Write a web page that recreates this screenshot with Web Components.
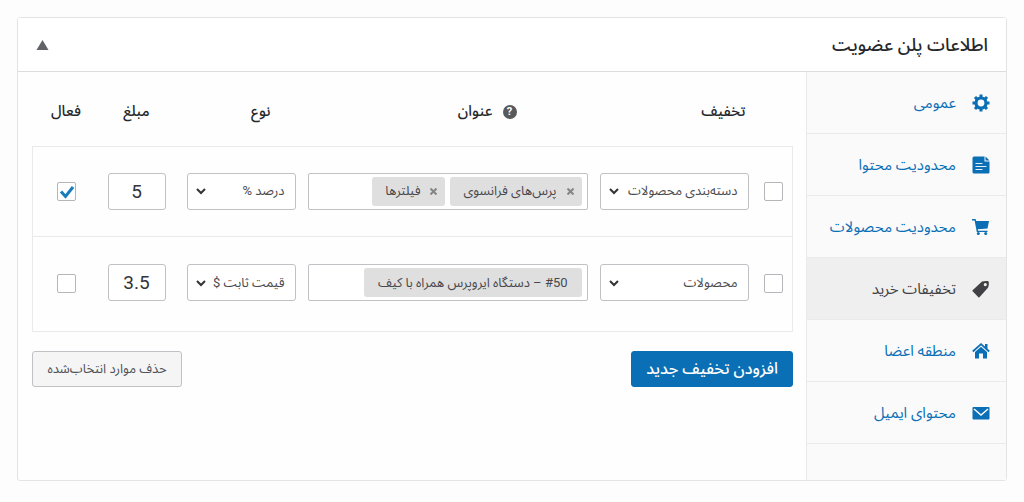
<!DOCTYPE html>
<html lang="fa" dir="rtl">
<head>
<meta charset="utf-8">
<meta name="viewport" content="width=device-width, initial-scale=1">
<title>اطلاعات پلن عضویت</title>
<style>
  body {
    margin: 0;
    padding: 17px;
    background: #fdfdfd;
    color: #26282b;
    font: 13px/20px Roboto, "Noto Sans Arabic", "DejaVu Sans", sans-serif;
    --blue: #0a6fb5;
    --line: #e9eaeb;
    --field: #bfc1c5;
  }
</style>
</head>
<body>

<plan-panel>
  <span slot="title">اطلاعات پلن عضویت</span>
  <panel-tab slot="tabs" icon="gear">عمومی</panel-tab>
  <panel-tab slot="tabs" icon="page">محدودیت محتوا</panel-tab>
  <panel-tab slot="tabs" icon="cart">محدودیت محصولات</panel-tab>
  <panel-tab slot="tabs" icon="tag" current>تخفیفات خرید</panel-tab>
  <panel-tab slot="tabs" icon="home">منطقه اعضا</panel-tab>
  <panel-tab slot="tabs" icon="mail">محتوای ایمیل</panel-tab>
  <discount-table></discount-table>
  <push-button slot="actions" kind="primary">افزودن تخفیف جدید</push-button>
  <push-button slot="actions">حذف موارد انتخاب‌شده</push-button>
</plan-panel>

<script>
const ICONS = {
  gear: '<path d="M7.500.5h3v4h-3zM7.500 13.500h3v4h-3zM.5 7.500h4v3h-4zM13.500 7.500h4v3h-4z"/><path d="M7.500.5h3v4h-3zM7.500 13.500h3v4h-3zM.5 7.500h4v3h-4zM13.500 7.500h4v3h-4z" transform="rotate(45 9 9)"/><circle cx="9" cy="9" r="5" fill="none" stroke="currentColor" stroke-width="3.200"/>',
  page: '<path d="M2 .5h10.500v5h5V16q0 1.500-1.500 1.500H2Q.5 17.500.5 16V2Q.5.5 2 .5z"/><path d="M13.500.5 17.500 4.500h-4z"/><path d="M3.500 7.500h7M3.500 10.500h11M3.500 13.500h7" stroke="#e4eef5" stroke-width="1"/>',
  cart: '<path d="M0 1h3.600l.6 2H17l-1.500 7.500-9.700.8.3 1.400h9.400v1.300H4.800L2.600 2.500H0z"/><circle cx="6.300" cy="15.500" r="1.500"/><circle cx="13.700" cy="15.500" r="1.500"/>',
  tag: '<path fill-rule="evenodd" d="M10 1.500Q12.500.6 15.800 1q1 .2 1 1.200.4 3.300-.8 5.600L7.400 17.200q-.5.500-1 0L.6 11.200q-.5-.5 0-1zM13.300 3a1.600 1.600 0 1 0 0 3.200 1.600 1.600 0 0 0 0-3.200z"/>',
  home: '<path d="M3 10l6-5.300 6 5.300v6.500h-4v-5H7v5H3z"/><path d="M.8 9.500 9 2.200l8.200 7.300" fill="none" stroke="currentColor" stroke-width="1.800"/><path d="M13 2h2.500v5L13 5z"/>',
  mail: '<rect x=".5" y="3" width="17" height="12.500" rx="1"/><path d="m2 5 7 6 7-6" fill="none" stroke="#fafafa" stroke-width="1.500"/>'
};

function define(name, render, setup) {
  customElements.define(name, class extends HTMLElement {
    connectedCallback() {
      if (this.shadowRoot) return;
      const root = this.attachShadow({ mode: 'open' });
      root.innerHTML = `<style>*{box-sizing:border-box}</style>` + render(this);
      if (setup) setup(root, this);
    }
  });
}

define('panel-tab', el => `
  <style>
    :host { display: block; border-bottom: 1px solid var(--line); }
    a { display: flex; align-items: center; gap: 16px; min-height: 61px; padding: 0 16px;
        color: var(--blue); font-size: 15px; text-decoration: none; }
    :host([current]) { background: #efefef; }
    :host([current]) a { color: #414145; }
    svg { width: 18px; height: 18px; fill: currentColor; flex: none; }
  </style>
  <a href="#${el.getAttribute('icon')}" ${el.hasAttribute('current') ? 'aria-current="page"' : ''}>
    <svg viewBox="0 0 18 18" aria-hidden="true">${ICONS[el.getAttribute('icon')]}</svg>
    <span><slot></slot></span>
  </a>`);

define('push-button', () => `
  <style>
    :host { display: block; }
    button { min-width: 150px; height: 36px; padding: 0 14px; border: 1px solid var(--field);
             border-radius: 3px; background: #f5f5f6; color: #505155; font: inherit; cursor: pointer; }
    :host([kind="primary"]) button { min-width: 160px; border-color: var(--blue); background: var(--blue); color: #fff; font-size: 16px; font-weight: 500; }
  </style>
  <button type="button"><slot></slot></button>`);

define('tick-box', el => `
  <style>
    :host { display: inline-grid; vertical-align: middle; }
    input, svg { grid-area: 1 / 1; width: 19px; height: 19px; margin: 0; }
    input { appearance: none; border: 1px solid #b4b6b9; border-radius: 2px; background: #fff; }
    svg { pointer-events: none; visibility: hidden; fill: none; stroke: #1a7bbb; stroke-width: 3; }
    input:checked + svg { visibility: visible; }
  </style>
  <input type="checkbox" aria-label="${el.getAttribute('label')}" ${el.hasAttribute('checked') ? 'checked' : ''}>
  <svg viewBox="0 0 19 19" aria-hidden="true"><path d="m4 9.500 4.500 5L16 5"/></svg>`);

define('choice-field', el => `
  <style>
    :host { display: grid; align-items: center; }
    select, svg { grid-area: 1 / 1; }
    select { appearance: none; width: 100%; height: 37px; padding: 0 10px; border: 1px solid var(--field);
             border-radius: 3px; background: #fff; color: #4a4b4f; font: inherit; }
    svg { justify-self: end; width: 10px; height: 8px; margin-inline-end: 9px; pointer-events: none;
          fill: none; stroke: #333; stroke-width: 2; }
  </style>
  <select aria-label="${el.getAttribute('label')}">
    ${el.getAttribute('options').split('|').map(o => `<option>${o}</option>`).join('')}
  </select>
  <svg viewBox="0 0 10 8" aria-hidden="true"><path d="m1 2 4 4 4-4"/></svg>`);

define('amount-field', el => `
  <style>
    :host { display: block; }
    input { display: block; width: 58px; height: 37px; margin: 0 auto; padding: 0; border: 1px solid var(--field);
            border-radius: 3px; background: #fff; color: #333438; font: inherit; font-size: 19px; text-align: center; }
  </style>
  <input type="text" inputmode="decimal" aria-label="مبلغ" value="${el.getAttribute('value')}">`);

define('tag-field', () => `
  <style>
    :host { display: flex; gap: 5px; height: 37px; padding: 3px 5px; border: 1px solid var(--field);
            border-radius: 2px; background: #fff; }
    input { flex: 1; width: 0; min-width: 0; border: 0; padding: 0; outline: 0; background: none; font: inherit; }
  </style>
  <slot></slot>
  <input type="text" aria-label="عنوان">`);

define('tag-chip', el => `
  <style>
    :host { display: flex; align-items: center; gap: 10px; padding-inline: 8px 13px; border-radius: 3px;
            background: #dfdfe0; color: #48494d; white-space: nowrap; }
    :host([fixed]) { padding-inline: 14px; }
    button { display: flex; padding: 0; border: 0; background: none; cursor: pointer; }
    svg { width: 7px; height: 7px; fill: none; stroke: #858589; stroke-width: 2; }
  </style>
  ${el.hasAttribute('fixed') ? '' : '<button type="button" aria-label="حذف"><svg viewBox="0 0 7 7"><path d="m.5.5 6 6m0-6-6 6"/></svg></button>'}
  <span><slot></slot></span>`,
  (root, el) => root.querySelector('button')?.addEventListener('click', () => el.remove()));

define('help-tip', () => `
  <style>
    :host { display: inline-flex; vertical-align: middle; margin-inline-end: 10px; }
    button { width: 14px; height: 14px; padding: 0; border: 0; border-radius: 50%; background: #58595b;
             color: #fff; font: bold 11px/14px Roboto, sans-serif; text-align: center; }
  </style>
  <button type="button" aria-label="راهنما">?</button>`);

define('discount-table', () => `
  <style>
    :host { display: block; }
    table { width: 100%; table-layout: fixed; border-collapse: collapse; }
    th { height: 74px; padding: 4px 0 0; font-size: 15px; font-weight: 500; text-align: center; }
    td { height: 90px; padding: 0 6px; }
    tbody tr { border: 1px solid var(--line); }
    tbody tr:last-child td { height: 95px; padding-bottom: 2px; }
    .check { width: 38px; }
    .discount { width: 161px; text-align: start; padding-inline-start: 9px; }
    .name { text-align: start; padding-inline-start: 77px; }
    .type { width: 128px; text-align: start; padding-inline-start: 31px; }
    .amount { width: 74px; }
    .active { width: 67px; }
    td:first-child { padding: 0; text-align: center; }
    td:nth-child(4) { padding-inline-end: 13px; }
    td:last-child { text-align: center; }
  </style>
  <table>
    <thead>
      <tr>
        <th class="check"></th>
        <th class="discount" scope="col">تخفیف</th>
        <th class="name" scope="col"><help-tip></help-tip>عنوان</th>
        <th class="type" scope="col">نوع</th>
        <th class="amount" scope="col">مبلغ</th>
        <th class="active" scope="col">فعال</th>
      </tr>
    </thead>
    <tbody>
      <tr>
        <td><tick-box label="انتخاب"></tick-box></td>
        <td><choice-field label="تخفیف" options="دسته‌بندی محصولات|محصولات"></choice-field></td>
        <td><tag-field><tag-chip>پرس‌های فرانسوی</tag-chip><tag-chip>فیلترها</tag-chip></tag-field></td>
        <td><choice-field label="نوع" options="درصد %|قیمت ثابت $"></choice-field></td>
        <td><amount-field value="5"></amount-field></td>
        <td><tick-box label="فعال" checked></tick-box></td>
      </tr>
      <tr>
        <td><tick-box label="انتخاب"></tick-box></td>
        <td><choice-field label="تخفیف" options="محصولات|دسته‌بندی محصولات"></choice-field></td>
        <td><tag-field><tag-chip fixed>#50 – دستگاه ایروپرس همراه با کیف</tag-chip></tag-field></td>
        <td><choice-field label="نوع" options="قیمت ثابت $|درصد %"></choice-field></td>
        <td><amount-field value="3.5"></amount-field></td>
        <td><tick-box label="فعال"></tick-box></td>
      </tr>
    </tbody>
  </table>`);

define('plan-panel', () => `
  <style>
    :host { display: block; border: 1px solid #e3e4e5; border-radius: 3px; background: #fefefe; }
    header { display: flex; align-items: center; justify-content: space-between; height: 54px; padding: 0 18px;
             border-bottom: 1px solid #dcddde; background: #fff; }
    h2 { margin: 0; font-size: 18px; line-height: 28px; font-weight: 500; }
    header button { display: flex; padding: 0; border: 0; background: none; cursor: pointer; }
    header svg { width: 13px; height: 10px; fill: #626366; }
    .body { display: grid; grid-template-columns: 200px 1fr; }
    nav { padding-bottom: 36px; border-inline-end: 1px solid var(--line); background: #fafafa; }
    main { min-width: 0; padding-inline: 13px 14px; }
    .actions { display: flex; justify-content: space-between; padding-top: 19px; }
  </style>
  <header>
    <h2><slot name="title"></slot></h2>
    <button type="button" aria-label="بستن"><svg viewBox="0 0 13 10"><path d="M6.500 0 12.500 10H.5z"/></svg></button>
  </header>
  <div class="body">
    <nav><slot name="tabs"></slot></nav>
    <main>
      <slot></slot>
      <div class="actions"><slot name="actions"></slot></div>
    </main>
  </div>`);
</script>
</body>
</html>
